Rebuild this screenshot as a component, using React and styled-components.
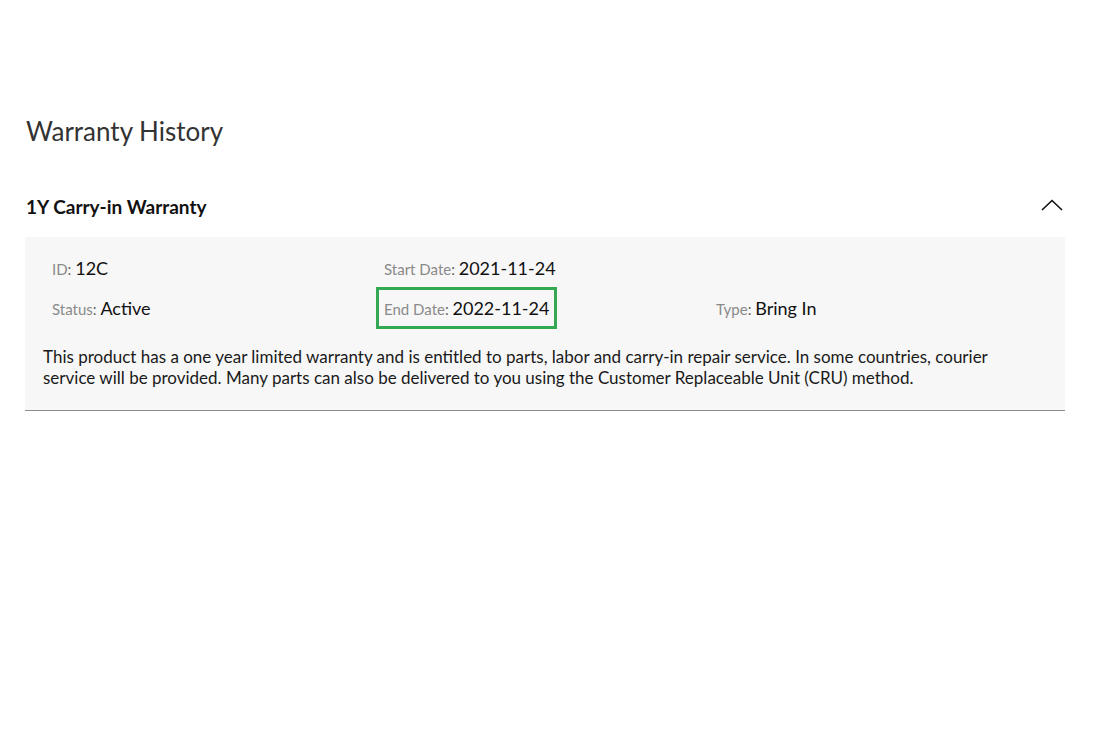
import styled, { createGlobalStyle } from "styled-components";

const GlobalStyle = createGlobalStyle`
  body {
    margin: 0;
    background: #fff;
    font-family: Lato, "Open Sans", sans-serif;
  }
`;

const fields = [
  [
    { label: "ID", value: "12C" },
    { label: "Start Date", value: "2021-11-24" },
    null,
  ],
  [
    { label: "Status", value: "Active" },
    { label: "End Date", value: "2022-11-24", highlight: true },
    { label: "Type", value: "Bring In" },
  ],
];

export default function App() {
  return (
    <Page>
      <GlobalStyle />
      <Title>Warranty History</Title>
      <Header>
        <h2>1Y Carry-in Warranty</h2>
        <svg width="22" height="12" viewBox="0 0 22 12" fill="none">
          <path d="M1 11 L11 1.5 L21 11" stroke="#111" strokeWidth="1.6" />
        </svg>
      </Header>
      <Panel>
        {fields.map((row, i) => (
          <Row key={i}>
            {row.map((f, j) =>
              f ? (
                <Field key={j} highlight={f.highlight}>
                  <Label>{f.label}</Label>: <Value>{f.value}</Value>
                </Field>
              ) : (
                <span key={j} />
              )
            )}
          </Row>
        ))}
        <Description>
          This product has a one year limited warranty and is entitled to parts, labor and carry-in repair
          service. In some countries, courier service will be provided. Many parts can also be delivered to
          you using the Customer Replaceable Unit (CRU) method.
        </Description>
      </Panel>
    </Page>
  );
}

const Page = styled.div`
  width: 1040px;
  padding: 114px 0 0 25px;
`;

const Title = styled.h1`
  margin: 0 0 0 1px;
  font-size: 26px;
  font-weight: 400;
  color: #333;
  line-height: 34px;
`;

const Header = styled.div`
  display: flex;
  align-items: center;
  justify-content: space-between;
  height: 60px;
  margin-top: 28px;
  margin-bottom: 1px;
  padding: 0 1px;
  h2 {
    margin: 0;
    font-size: 19px;
    font-weight: 700;
    color: #111;
  }
  svg {
    margin-right: 1px;
    margin-top: -3px;
  }
`;

const Panel = styled.div`
  background: #f7f7f7;
  border-bottom: 1px solid #8c8c8c;
  padding: 10px 0 22px 0;
`;

const Row = styled.div`
  display: grid;
  grid-template-columns: 332px 332px 332px;
  padding-left: 19px;
  height: 40px;
  align-items: center;
`;

const Field = styled.div`
  justify-self: start;
  padding: 7px 5px 7px 5px;
  border: 3px solid ${(p) => (p.highlight ? "#35a853" : "transparent")};
  font-size: 15px;
  color: #666;
  white-space: nowrap;
`;

const Label = styled.span`
  color: #8a8a8a;
  font-size: 15px;
`;

const Value = styled.span`
  color: #111;
  font-size: 18px;
`;

const Description = styled.p`
  margin: 19px 0 0 18px;
  max-width: 1000px;
  font-size: 17px;
  line-height: 21px;
  color: #1a1a1a;
`;
